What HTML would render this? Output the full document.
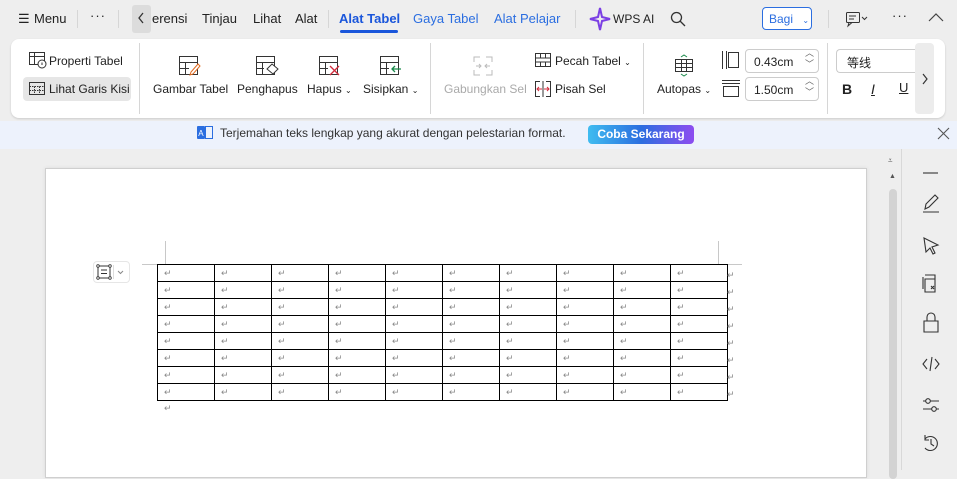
<!DOCTYPE html>
<html><head><meta charset="utf-8">
<style>
*{margin:0;padding:0;box-sizing:border-box}
body{width:957px;height:470px;overflow:hidden;background:#eeeeee;font-family:"Liberation Sans","Noto Sans CJK SC",sans-serif;color:#222;position:relative}
.a{position:absolute;white-space:nowrap}
.t{font-size:13px;top:11px}
.r{font-size:12px;color:#222}
svg{position:absolute;overflow:visible}
.sep{position:absolute;width:1px;background:#d6d6d6}
td{border:1px solid #000;width:57px;height:17px;font-size:9px;color:#888;padding-left:6px;vertical-align:middle;line-height:10px}
table{border-collapse:collapse;position:absolute;left:157px;top:264px}
</style></head><body>
<!-- top bar -->
<div class="a t" style="left:18px;font-size:13px">☰</div>
<div class="a t" style="left:34px">Menu</div>
<div class="sep" style="left:77px;top:10px;height:18px"></div>
<div class="a t" style="left:90px;top:8px;letter-spacing:1px">···</div>
<div class="sep" style="left:118px;top:10px;height:18px"></div>
<div class="a" style="left:132px;top:5px;width:19px;height:28px;background:#dcdcdc;border-radius:3px"></div>
<svg style="left:137px;top:12px" width="8" height="12"><path d="M6 1L2 6L6 11" stroke="#333" stroke-width="1.3" fill="none"/></svg>
<div class="a t" style="left:152px">erensi</div>
<div class="a t" style="left:202px">Tinjau</div>
<div class="a t" style="left:253px">Lihat</div>
<div class="a t" style="left:295px">Alat</div>
<div class="sep" style="left:328px;top:10px;height:18px"></div>
<div class="a t" style="left:339px;font-weight:bold;color:#1a56db">Alat Tabel</div>
<div class="a" style="left:340px;top:30px;width:58px;height:3px;background:#1a56db;border-radius:2px"></div>
<div class="a t" style="left:413px;color:#2b6ee0">Gaya Tabel</div>
<div class="a t" style="left:494px;color:#2b6ee0">Alat Pelajar</div>
<div class="sep" style="left:575px;top:10px;height:18px"></div>
<svg style="left:590px;top:8px" width="20" height="22"><path d="M10 0L12 9L20 11L12 13L10 22L8 13L0 11L8 9Z" fill="none" stroke="#7b3fe4" stroke-width="2"/></svg>
<div class="a t" style="left:613px;font-size:12px;top:12px">WPS AI</div>
<svg style="left:670px;top:11px" width="16" height="16"><circle cx="6.5" cy="6.5" r="5" stroke="#333" stroke-width="1.3" fill="none"/><path d="M10 10L15 15" stroke="#333" stroke-width="1.3"/></svg>
<div class="a" style="left:762px;top:7px;width:50px;height:23px;border:1px solid #2b6ee0;border-radius:4px;background:#fff;color:#2b6ee0;font-size:12px;padding:4px 0 0 6px">Bagi <span style="font-size:8px;margin-left:6px">⌄</span></div>
<div class="sep" style="left:828px;top:10px;height:18px"></div>
<svg style="left:846px;top:12px" width="22" height="14"><rect x="0.5" y="0.5" width="13" height="10" rx="1" fill="none" stroke="#333"/><path d="M3 4H10M3 7H8M3 10.5L2 14L6 10.5" stroke="#333" fill="none"/><path d="M16 5L18.5 7.5L21 5" stroke="#333" fill="none"/></svg>
<div class="a t" style="left:892px;top:8px;letter-spacing:1px">···</div>
<svg style="left:928px;top:13px" width="16" height="9"><path d="M1 8L8 1L15 8" stroke="#444" stroke-width="1.2" fill="none"/></svg>

<!-- ribbon -->
<div class="a" style="left:11px;top:39px;width:934px;height:79px;background:#fff;border-radius:8px;box-shadow:0 1px 2px rgba(0,0,0,.15)"></div>
<svg style="left:29px;top:52px" width="18" height="16"><rect x="0.5" y="0.5" width="15" height="12" fill="none" stroke="#333"/><path d="M0.5 4.5H15.5M5.5 0.5V12.5" stroke="#333"/><circle cx="13" cy="12" r="4" fill="#fff" stroke="#333"/><path d="M13 10.5V13" stroke="#333"/></svg>
<div class="a r" style="left:49px;top:54px">Properti Tabel</div>
<div class="a" style="left:23px;top:77px;width:108px;height:24px;background:#e6e6e6;border-radius:4px"></div>
<svg style="left:29px;top:82px" width="16" height="13"><rect x="0.5" y="0.5" width="15" height="12" fill="none" stroke="#333"/><path d="M0.5 4.5H15.5M0.5 8.5H15.5M5.5 4.5V12.5M10.5 4.5V12.5" stroke="#333" stroke-dasharray="1.5 1"/></svg>
<div class="a r" style="left:49px;top:82px">Lihat Garis Kisi</div>
<div class="sep" style="left:139px;top:43px;height:71px"></div>

<svg style="left:179px;top:56px" width="22" height="20"><rect x="0.5" y="0.5" width="18" height="18" fill="none" stroke="#333"/><path d="M0.5 6.5H18.5M0.5 12.5H10M6.5 6.5V18.5" stroke="#333"/><path d="M19 8L12 16L11 19L14 18L21 10Z" fill="#fff" stroke="#e06a1f"/></svg>
<div class="a r" style="left:153px;top:82px">Gambar Tabel</div>
<svg style="left:256px;top:56px" width="22" height="20"><rect x="0.5" y="0.5" width="18" height="18" fill="none" stroke="#333"/><path d="M0.5 6.5H18.5M0.5 12.5H8M6.5 6.5V18.5" stroke="#333"/><path d="M16 8L22 13L17 18L11 13Z" fill="#fff" stroke="#333"/></svg>
<div class="a r" style="left:237px;top:82px">Penghapus</div>
<svg style="left:319px;top:56px" width="22" height="20"><rect x="0.5" y="0.5" width="18" height="18" fill="none" stroke="#333"/><path d="M0.5 6.5H18.5M0.5 12.5H9M6.5 6.5V18.5" stroke="#333"/><path d="M11 10L20 19M20 10L11 19" stroke="#d12b3c" stroke-width="1.3"/></svg>
<div class="a r" style="left:307px;top:82px">Hapus <span style="font-size:8px">⌄</span></div>
<svg style="left:380px;top:56px" width="22" height="20"><rect x="0.5" y="0.5" width="18" height="18" fill="none" stroke="#333"/><path d="M0.5 6.5H18.5M0.5 12.5H9M6.5 6.5V18.5" stroke="#333"/><path d="M21 13H12M15 10L12 13L15 16" stroke="#1b8a4b" stroke-width="1.3" fill="none"/></svg>
<div class="a r" style="left:363px;top:82px">Sisipkan <span style="font-size:8px">⌄</span></div>
<div class="sep" style="left:430px;top:43px;height:71px"></div>

<svg style="left:473px;top:56px" width="20" height="20"><path d="M1 6V1H7M13 1H19V6M1 14V19H7M13 19H19V14M3 10H8M6 8L8 10L6 12M17 10H12M14 8L12 10L14 12" stroke="#bbb" fill="none"/></svg>
<div class="a r" style="left:444px;top:82px;color:#aaa">Gabungkan Sel</div>
<svg style="left:535px;top:53px" width="16" height="14"><rect x="0.5" y="0.5" width="15" height="13" fill="none" stroke="#333"/><path d="M0.5 5H15.5M0.5 9H15.5M5.5 0.5V5M10.5 0.5V5M5.5 9V13.5M10.5 9V13.5" stroke="#333"/></svg>
<div class="a r" style="left:555px;top:54px">Pecah Tabel <span style="font-size:8px">⌄</span></div>
<svg style="left:535px;top:81px" width="16" height="16"><path d="M5 0.5H0.5V15.5H5M11 0.5H15.5V15.5H11M8 0V16" stroke="#333" fill="none"/><path d="M7 8H2M4 6L2 8L4 10M9 8H14M12 6L14 8L12 10" stroke="#d12b3c" fill="none"/></svg>
<div class="a r" style="left:555px;top:82px">Pisah Sel</div>
<div class="sep" style="left:643px;top:43px;height:71px"></div>

<svg style="left:674px;top:54px" width="20" height="24"><path d="M7 3L10 1L13 3" stroke="#1b8a4b" fill="none"/><rect x="1.5" y="5.5" width="17" height="12" fill="none" stroke="#333"/><path d="M1.5 9.5H18.5M1.5 13.5H18.5M7.5 5.5V17.5M12.5 5.5V17.5" stroke="#333"/><path d="M7 20L10 22L13 20" stroke="#1b8a4b" fill="none"/></svg>
<div class="a r" style="left:657px;top:82px">Autopas <span style="font-size:8px">⌄</span></div>
<svg style="left:722px;top:51px" width="18" height="18"><path d="M0.5 0V18M4.5 0V18" stroke="#333"/><rect x="6.5" y="1.5" width="10" height="15" fill="none" stroke="#333"/></svg>
<svg style="left:722px;top:80px" width="18" height="18"><path d="M0 0.5H18M0 3.5H18" stroke="#333"/><rect x="1.5" y="6.5" width="15" height="10" fill="none" stroke="#333"/></svg>
<div class="a" style="left:745px;top:49px;width:74px;height:24px;border:1px solid #ccc;border-radius:4px"></div>
<div class="a r" style="left:754px;top:55px">0.43cm</div>
<div class="a" style="left:805px;top:48px;font-size:9px;color:#666;line-height:11px">︿<br>﹀</div>
<div class="a" style="left:745px;top:77px;width:74px;height:24px;border:1px solid #ccc;border-radius:4px"></div>
<div class="a r" style="left:754px;top:83px">1.50cm</div>
<div class="a" style="left:805px;top:76px;font-size:9px;color:#666;line-height:11px">︿<br>﹀</div>
<div class="sep" style="left:827px;top:43px;height:71px"></div>
<div class="a" style="left:836px;top:49px;width:80px;height:24px;border:1px solid #ccc;border-right:none;border-radius:4px 0 0 4px"></div>
<div class="a r" style="left:847px;top:54px">等线</div>
<div class="a" style="left:842px;top:81px;font-size:14px;font-weight:bold">B</div>
<div class="a" style="left:871px;top:81px;font-size:14px;font-style:italic;text-decoration:underline">I</div>
<div class="a" style="left:899px;top:80px;font-size:13px;text-decoration:underline">U</div>
<div class="a" style="left:915px;top:43px;width:19px;height:71px;background:#ececec;border-radius:4px"></div>
<svg style="left:921px;top:73px" width="8" height="12"><path d="M2 1L6 6L2 11" stroke="#333" stroke-width="1.2" fill="none"/></svg>

<!-- banner -->
<div class="a" style="left:0;top:121px;width:957px;height:28px;background:#edf2fc"></div>
<svg style="left:197px;top:126px" width="16" height="13"><rect x="0" y="0" width="8" height="13" rx="1" fill="#2b6ee0"/><text x="1.2" y="10" font-size="8" fill="#fff" font-family="Liberation Sans">A</text><rect x="8.5" y="0.5" width="7" height="12" fill="none" stroke="#2b6ee0"/></svg>
<div class="a" style="left:220px;top:126px;font-size:12px;color:#333">Terjemahan teks lengkap yang akurat dengan pelestarian format.</div>
<div class="a" style="left:588px;top:125px;width:106px;height:19px;border-radius:4px;background:linear-gradient(90deg,#3fbcf0,#2b6ee0 50%,#8d4cf0);color:#fff;font-size:12px;font-weight:bold;text-align:center;line-height:19px">Coba Sekarang</div>
<svg style="left:938px;top:128px" width="11" height="11"><path d="M0 0L11 11M11 0L0 11" stroke="#555" stroke-width="1.1"/></svg>

<!-- page -->
<div class="a" style="left:45px;top:168px;width:822px;height:310px;background:#fff;border:1px solid #cfcfcf;box-shadow:0 0 4px rgba(0,0,0,.08)"></div>
<div class="a" style="left:165px;top:241px;width:1px;height:23px;background:#c8c8c8"></div>
<div class="a" style="left:142px;top:264px;width:15px;height:1px;background:#c8c8c8"></div>
<div class="a" style="left:718px;top:241px;width:1px;height:23px;background:#c8c8c8"></div>
<div class="a" style="left:726px;top:264px;width:16px;height:1px;background:#c8c8c8"></div>
<div class="a" style="left:93px;top:261px;width:37px;height:22px;border:1px solid #e6e6e6;border-radius:4px;background:#fff"></div>
<svg style="left:97px;top:265px" width="30" height="14"><rect x="1" y="1" width="12" height="12" fill="none" stroke="#333"/><path d="M4 5H10M4 8.5H10" stroke="#333"/><circle cx="1" cy="1" r="1.3" fill="#fff" stroke="#333" stroke-width=".8"/><circle cx="13" cy="1" r="1.3" fill="#fff" stroke="#333" stroke-width=".8"/><circle cx="1" cy="13" r="1.3" fill="#fff" stroke="#333" stroke-width=".8"/><circle cx="13" cy="13" r="1.3" fill="#fff" stroke="#333" stroke-width=".8"/><path d="M16.5 0V14" stroke="#ddd"/><path d="M21 6L23.5 8.5L26 6" stroke="#888" fill="none"/></svg>
<table>
<tr><td>↵</td><td>↵</td><td>↵</td><td>↵</td><td>↵</td><td>↵</td><td>↵</td><td>↵</td><td>↵</td><td>↵</td></tr>
<tr><td>↵</td><td>↵</td><td>↵</td><td>↵</td><td>↵</td><td>↵</td><td>↵</td><td>↵</td><td>↵</td><td>↵</td></tr>
<tr><td>↵</td><td>↵</td><td>↵</td><td>↵</td><td>↵</td><td>↵</td><td>↵</td><td>↵</td><td>↵</td><td>↵</td></tr>
<tr><td>↵</td><td>↵</td><td>↵</td><td>↵</td><td>↵</td><td>↵</td><td>↵</td><td>↵</td><td>↵</td><td>↵</td></tr>
<tr><td>↵</td><td>↵</td><td>↵</td><td>↵</td><td>↵</td><td>↵</td><td>↵</td><td>↵</td><td>↵</td><td>↵</td></tr>
<tr><td>↵</td><td>↵</td><td>↵</td><td>↵</td><td>↵</td><td>↵</td><td>↵</td><td>↵</td><td>↵</td><td>↵</td></tr>
<tr><td>↵</td><td>↵</td><td>↵</td><td>↵</td><td>↵</td><td>↵</td><td>↵</td><td>↵</td><td>↵</td><td>↵</td></tr>
<tr><td>↵</td><td>↵</td><td>↵</td><td>↵</td><td>↵</td><td>↵</td><td>↵</td><td>↵</td><td>↵</td><td>↵</td></tr>
</table>
<div class="a" style="left:727px;top:267px;font-size:9px;color:#888;line-height:17px">↵<br>↵<br>↵<br>↵<br>↵<br>↵<br>↵<br>↵</div>
<div class="a" style="left:164px;top:403px;font-size:9px;color:#888">↵</div>

<!-- scrollbar -->
<div class="a" style="left:888px;top:157px;font-size:8px;color:#555;line-height:8px">⩡</div>
<div class="a" style="left:889px;top:173px;font-size:7px;color:#555">▲</div>
<div class="a" style="left:889px;top:189px;width:8px;height:290px;background:#d3d3d3;border-radius:4px"></div>
<div class="a" style="left:901px;top:149px;width:1px;height:321px;background:#d8d8d8"></div>
<!-- sidebar icons -->
<svg style="left:921px;top:165px" width="20" height="300" fill="none" stroke="#333" stroke-width="1.1">
<path d="M2 8H17"/>
<path d="M2 47H18M4 44L5 39L14 30L17 33L8 42Z"/>
<path d="M3 73L17 80L11 82L14 88L12 89L9 83L5 87Z"/>
<path d="M2 112V124M4 110H14V114M4 114H14V127H4Z M10 121L13 124M13 121L10 124"/>
<path d="M3 156H17V167H3Z M6 156V152A4 4 0 0 1 14 152V156"/>
<path d="M6 194L2 199L6 204M14 194L18 199L14 204M11 192L9 206"/>
<path d="M2 236H18M2 244H18"/><circle cx="7" cy="236" r="2.3" fill="#eee"/><circle cx="13" cy="244" r="2.3" fill="#eee"/>
<path d="M4 274A7 7 0 1 1 4 283M4 270V275H8M10 274V279L13 281"/>
</svg>
</body></html>
